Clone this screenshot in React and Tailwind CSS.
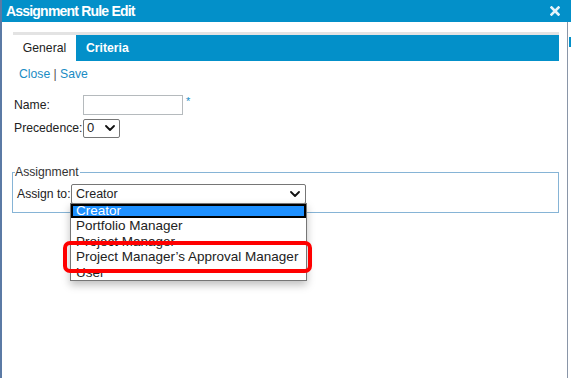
import React from 'react';

const options = ['Creator', 'Portfolio Manager', 'Project Manager', "Project Manager\u2019s Approval Manager", 'User'];

function Chevron({ className }) {
  return (
    <svg viewBox="0 0 10 6" className={className} fill="none" stroke="currentColor" strokeWidth="1.8" strokeLinecap="round" strokeLinejoin="round">
      <path d="M1 1l4 4 4-4" />
    </svg>
  );
}

export default function App() {
  return (
    <div className="w-[571px] h-[378px] flex bg-white overflow-hidden font-['Liberation_Sans',Arial,sans-serif] text-[12.2px] text-[#222]">
      <div className="relative flex-1 flex flex-col border-l-2 border-[#5b7aa5]">
        {/* title bar */}
        <div className="h-[22px] bg-[#0390c9] flex items-center justify-between pl-[4px] pr-[7px]">
          <span className="text-white font-bold text-[14px] tracking-[-0.8px]">Assignment Rule Edit</span>
          <svg viewBox="0 0 10 10" className="w-[10px] h-[10px] text-[#e6f3fa]">
            <path d="M1.5 1.5l7 7M8.5 1.5l-7 7" stroke="currentColor" strokeWidth="2.6" strokeLinecap="square" />
          </svg>
        </div>

        <div className="pl-[11px] pr-[8px] pt-[10px]">
          {/* tabs */}
          <div className="border-t-[3px] border-[#e3e3e3]">
            <div className="flex h-[26px]">
              <div className="w-[63px] flex items-center justify-center bg-white text-[#222]">General</div>
              <div className="flex-1 bg-[#0390c9] text-white font-bold flex items-center pl-[10px]">Criteria</div>
            </div>
          </div>

          <div className="pl-[6px] pt-[6px] text-[#1a8cc4] leading-[15px]">
            Close <span className="text-[#555]">|</span> Save
          </div>

          {/* form */}
          <div className="pt-[13px] pl-[1px] flex flex-col gap-[4px]">
            <div className="flex items-center h-[20px]">
              <span className="w-[69px]">Name:</span>
              <div className="w-[100px] h-[20px] border border-[#b5babd] bg-white" />
              <span className="self-start text-[#1a8cc4] text-[11px] leading-[8px] ml-[3px] mt-[2px]">*</span>
            </div>
            <div className="flex items-center h-[18px]">
              <span className="w-[69px]">Precedence:</span>
              <div className="w-[37px] h-[19px] border border-[#767676] rounded-[2px] flex items-center justify-between pl-[3px] pr-[4px]">
                <span className="text-[13px]">0</span>
                <Chevron className="w-[10px] h-[6px] text-[#111]" />
              </div>
            </div>
          </div>

          {/* fieldset */}
          <div className="relative mt-[35px] ml-[-1px] h-[41px] border border-[#86b4d6]">
            <span className="absolute left-[2px] top-[-8px] bg-white pr-[1px] leading-[15px] text-[#333]">Assignment</span>
            <div className="flex items-center pt-[11px] pl-[4px]">
              <span className="w-[54px]">Assign to:</span>
              <div className="w-[235px] h-[20px] border border-[#767676] rounded-[2px] flex items-center justify-between pl-[4px] pr-[5px] bg-white">
                <span className="text-[12.5px]">Creator</span>
                <Chevron className="w-[10px] h-[6px] text-[#111]" />
              </div>
            </div>
          </div>
        </div>

        {/* open dropdown list */}
        <div className="absolute left-[68px] top-[203px] w-[237px] border border-[#767676] bg-white shadow-[0_4px_8px_rgba(0,0,0,0.25)] text-[13.5px] leading-[15.5px]">
          {options.map((o, i) => (
            <div
              key={o}
              className={i === 0 ? 'bg-[#1e90ff] text-white border-2 border-black pl-[3px] leading-[10px]' : 'pl-[5px] text-[#222]'}
            >
              {o}
            </div>
          ))}
        </div>

        {/* highlight marker */}
        <div className="absolute left-[61px] top-[241px] w-[249px] h-[32px] border-[4px] border-[#ff0000] rounded-[7px]" />
      </div>

      <div className="w-[4px] flex flex-col">
        <div className="h-[22px] bg-[#0390c9]" />
        <div className="flex-1 border-l border-[#8a96a8] bg-white relative">
          <div className="absolute right-0 top-[15px] w-[2px] h-[10px] bg-[#0390c9]" />
        </div>
      </div>
    </div>
  );
}
